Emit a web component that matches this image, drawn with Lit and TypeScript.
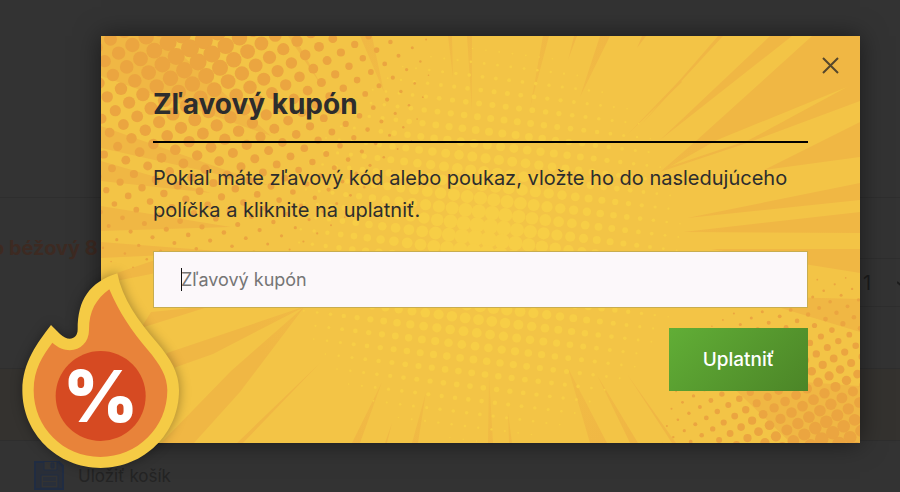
import { LitElement, html, svg, css } from "lit";
import { customElement } from "lit/decorators.js";

type Dot = { x: number; y: number; r: number };

// Square halftone lattice whose dots shrink with the distance from a focus.
function halftone(
  ox: number, oy: number, ux: number, uy: number,
  fx: number, fy: number, peak: number, falloff: number,
): Dot[] {
  const dots: Dot[] = [];
  for (let i = -50; i <= 50; i++) {
    for (let j = -50; j <= 50; j++) {
      const x = ox + i * ux - j * uy;
      const y = oy + i * uy + j * ux;
      const r = peak - falloff * Math.hypot(x - fx, y - fy);
      if (r < 0.7 || x < -9 || y < -9 || x > 768 || y > 416) continue;
      dots.push({ x: Math.round(x * 10) / 10, y: Math.round(y * 10) / 10, r: Math.round(r * 10) / 10 });
    }
  }
  return dots;
}

const cornerDots = halftone(53.3, 14.7, 13.8, -8.1, 92, 2, 9.4, 0.036);
const footDots = halftone(644.7, 373.7, 11, -6.4, 729, 409, 7.2, 0.038);
const centreDots = halftone(388, 95.7, 13.3, 1.7, 384, 208, 8.4, 0.039);

const rays = [
  "617,0 622,0 539,90",
  "669,0 691,0 559,104",
  "711,0 759,0 759,65 649,106 559,136 596,104",
  "759,86 759,121 663,134",
  "759,147 759,164 586,182",
  "759,176 759,197 582,196",
  "759,213 759,237 610,213",
  "759,263 759,296 640,260",
  "759,350 759,407 690,407 620,340",
  "489,407 506,407 467,332",
  "529,407 537,407 496,339",
  "571,407 575,407 526,338",
  "251,407 259,407 281,346",
  "311,407 317,407 325,356",
  "284,407 286,407 291,387",
  "387,407 392,407 388,339",
  "408,407 411,407 407,376",
  "60,407 93,407 139,356 204,270 130,335",
  "136,407 142,407 219,327",
  "50,340 66,317 205,270 112,318",
  "40,292 50,276 110,270",
  "0,206 0,222 130,216",
  "10,239 60,222 60,236 15,245",
  "0,90 0,112 170,150",
  "0,125 0,145 110,157",
  "0,170 0,195 130,191",
  "0,0 60,0 170,100 0,40",
  "259,0 271,0 283,56",
  "187,0 193,0 222,52",
  "347,0 351,0 352,42",
  "366,0 371,0 371,76",
  "442,0 448,0 429,72",
  "473,0 476,0 467,24",
  "499,0 509,0 479,61",
  "541,0 545,0 536,12",
  "579,44 581,46 526,99",
];

@customElement("coupon-backdrop")
class CouponBackdrop extends LitElement {
  static styles = css`
    :host { display: block; }
    svg { display: block; width: 100%; height: 100%; }
    .gleam { fill: #f3c446; }
    .orange { fill: #eba540; }
    .yellow { fill: #f7ce46; }
  `;
  render() {
    const circles = (dots: Dot[]) => dots.map((d) => svg`<circle cx=${d.x} cy=${d.y} r=${d.r} />`);
    return html`<svg viewBox="0 0 759 407" preserveAspectRatio="xMidYMid slice" aria-hidden="true">
      <defs>
        <radialGradient id="ray" gradientUnits="userSpaceOnUse" cx="380" cy="204" r="290">
          <stop offset="0.35" stop-color="#f0b744" stop-opacity="0.3" />
          <stop offset="0.85" stop-color="#f0b744" />
        </radialGradient>
      </defs>
      <g fill="url(#ray)">${rays.map((p) => svg`<polygon points=${p} />`)}</g>
      <polygon class="gleam" points="746,51 616,104 570,130 648,104" />
      <g class="yellow">${circles(centreDots)}</g>
      <g class="orange">${circles(cornerDots)}${circles(footDots)}</g>
    </svg>`;
  }
}

@customElement("flame-badge")
class FlameBadge extends LitElement {
  static styles = css`
    :host { display: block; }
    svg { display: block; width: 100%; height: 100%; overflow: visible; filter: drop-shadow(0 0 6px rgba(0, 0, 0, 0.35)); }
    .rim { fill: #f5cb45; }
    .body { fill: #e8833a; }
    .core { fill: #d64a22; }
    .percent { fill: #fff; font: 900 213px Inter, sans-serif; text-anchor: middle; }
  `;
  render() {
    return html`<svg viewBox="0 0 540 681" role="img" aria-label="%">
      <path class="rim" d="M322 25C336 100 385 168 440 232C484 284 507 325 507 376C507 506 402 609 272 609C142 609 37 506 37 376C37 290 84 232 123 180L150 207C174 231 203 224 203 193C203 105 238 52 322 25Z" />
      <path class="body" d="M298 73C326 140 366 200 413 254C452 300 472 335 472 376C472 488 382 576 271 576C160 576 71 488 71 376C71 312 98 272 127 233C177 278 237 250 237 195C237 137 258 103 298 73Z" />
      <circle class="core" cx="272" cy="393" r="135" />
      <text class="percent" x="272" y="471">%</text>
    </svg>`;
  }
}

@customElement("app-root")
class AppRoot extends LitElement {
  static styles = css`
    :host { display: block; position: relative; min-height: 100vh; overflow: hidden; background: #333; color: #2d2d2d; font-family: Inter, "Liberation Sans", sans-serif; }
    * { box-sizing: border-box; }
    .page { position: absolute; inset: 0; display: flex; flex-direction: column; }
    .top { height: 198px; border-bottom: 1px solid #2e2e2e; }
    .item { height: 171px; display: flex; justify-content: space-between; border-bottom: 1px solid #2e2e2e; }
    .product { margin: 37px 0 0 -8px; font-size: 20px; line-height: 26px; font-weight: 700; color: #3d2a22; white-space: nowrap; }
    .quantity { width: 60px; height: 49px; margin-top: 60px; border: 1px solid #2e2e2e; border-width: 1px 0; display: flex; align-items: center; padding-left: 23px; gap: 26px; font-size: 20px; color: #1c1c1c; white-space: nowrap; }
    .quantity svg { width: 12px; height: 12px; flex: none; }
    .band { height: 72px; background: #34322f; border-bottom: 1px solid #2e2e2e; }
    .save { display: flex; align-items: center; gap: 14px; padding: 20px 0 0 34px; font-size: 17px; line-height: 30px; color: #242424; text-decoration: none; }
    .save svg { width: 30px; height: 30px; }
    .overlay { position: relative; padding: 36px 40px 49px 101px; }
    .modal { position: relative; background: #f3c446; box-shadow: 0 0 24px rgba(0, 0, 0, 0.5); }
    coupon-backdrop { position: absolute; inset: 0; }
    .content { position: relative; padding: 49px 52px 52px; display: flex; flex-direction: column; }
    h1 { margin: 0; padding-bottom: 18px; border-bottom: 2px solid #000; font-size: 28px; line-height: 38px; font-weight: 700; }
    p { margin: 19px 0 25px; font-size: 20px; line-height: 32px; }
    .field { position: relative; display: flex; }
    input { width: 100%; height: 57px; padding: 0 27px; border: 1px solid #c8ad4e; border-radius: 0; background: #fcf8fa; font: 18px Inter, sans-serif; color: #2d2d2d; outline: 0; }
    input::placeholder { color: #757575; opacity: 1; }
    .caret { position: absolute; left: 28px; top: 17px; width: 1px; height: 23px; background: #111; }
    .apply { align-self: flex-end; margin-top: 20px; width: 139px; height: 63px; border: 0; background: linear-gradient(135deg, #61ae36, #4c8527); color: #fff; font: 500 19px Inter, sans-serif; }
    .close { position: absolute; right: 15px; top: 16px; width: 28px; height: 28px; padding: 0; border: 0; background: none; }
    .close svg { display: block; width: 28px; height: 28px; }
    flame-badge { position: absolute; left: -91px; bottom: -49px; width: 180px; height: 227px; }
  `;
  render() {
    return html`
      <div class="page">
        <div class="top"></div>
        <div class="item">
          <div class="product">o béžový 8</div>
          <div class="quantity">
            <span>1</span>
            <svg viewBox="0 0 12 12" fill="none" stroke="#1c1c1c" stroke-width="2" aria-hidden="true"><path d="M0 5L6 10L12 5" /></svg>
          </div>
        </div>
        <div class="band"></div>
        <a class="save" href="#">
          <svg viewBox="0 0 30 30" fill="none" stroke="#202c42" aria-hidden="true">
            <path d="M1 1H25L29 5V28H1Z" fill="#292e38" stroke-width="2" />
            <path d="M10 1V9H23V1M17 2H20V7H17Z" fill="#333" />
            <path d="M7 14H24V27H7Z" fill="#333" />
            <path d="M9 17H22M9 19H22M9 22H22M9 24H22" />
          </svg>
          <span>Uložiť košík</span>
        </a>
      </div>
      <div class="overlay">
        <div class="modal" role="dialog" aria-labelledby="title">
          <coupon-backdrop></coupon-backdrop>
          <form class="content" @submit=${(e: Event) => e.preventDefault()}>
            <h1 id="title">Zľavový kupón</h1>
            <p>Pokiaľ máte zľavový kód alebo poukaz, vložte ho do nasledujúceho políčka a kliknite na uplatniť.</p>
            <div class="field">
              <input type="text" aria-label="Zľavový kupón" placeholder="Zľavový kupón" />
              <span class="caret"></span>
            </div>
            <button class="apply" type="submit">Uplatniť</button>
          </form>
          <button class="close" type="button" aria-label="Zavrieť">
            <svg viewBox="0 0 28 28" fill="none" stroke="#56472c" stroke-width="2"><path d="M6 6L21 21M21 6L6 21" /></svg>
          </button>
          <flame-badge></flame-badge>
        </div>
      </div>`;
  }
}
